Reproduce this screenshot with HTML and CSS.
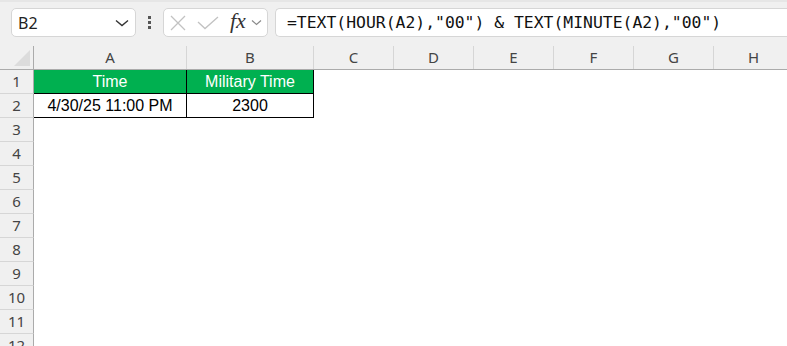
FILE: index.html
```html
<!DOCTYPE html>
<html>

<head>
    <title>Military Time</title>
    <link rel="stylesheet" href="styles.css">
</head>

<body>
    <div class="toolbar">
        <div class="name-box">
            <span>B2</span>
            <svg width="14" height="8" viewBox="0 0 14 8"><path d="M1 1.5 L7 6.5 L13 1.5" fill="none" stroke="#333" stroke-width="1.4"/></svg>
        </div>
        <div class="dots"><i></i><i></i><i></i></div>
        <div class="fx-box">
            <svg class="cancel" width="16" height="16" viewBox="0 0 16 16"><path d="M1 1 L15 15 M15 1 L1 15" stroke="#c2c2c2" stroke-width="1.3"/></svg>
            <svg class="enter" width="22" height="14" viewBox="0 0 22 14"><path d="M1 6 L8 12.5 L21 1" fill="none" stroke="#c2c2c2" stroke-width="1.3"/></svg>
            <span class="fx">fx</span>
            <svg width="11" height="7" viewBox="0 0 11 7"><path d="M1 1.5 L5.5 5.5 L10 1.5" fill="none" stroke="#8a8a8a" stroke-width="1.2"/></svg>
        </div>
        <div class="formula">=TEXT(HOUR(A2),"00") &amp; TEXT(MINUTE(A2),"00")</div>
    </div>

    <div class="sheet">
        <div class="row head">
            <div class="rh corner"><svg width="16" height="16" viewBox="0 0 16 16"><path d="M0 16 L16 16 L16 0 Z" fill="#dcdcdc"/></svg></div>
            <div class="ch a">A</div><div class="ch b">B</div><div class="ch">C</div><div class="ch">D</div>
            <div class="ch">E</div><div class="ch">F</div><div class="ch">G</div><div class="ch">H</div>
        </div>
        <div class="row">
            <div class="rh">1</div>
            <div class="cell a title">Time</div><div class="cell b title">Military Time</div>
        </div>
        <div class="row">
            <div class="rh">2</div>
            <div class="cell a data">4/30/25 11:00 PM</div><div class="cell b data">2300</div>
        </div>
        <div class="row"><div class="rh">3</div></div>
        <div class="row"><div class="rh">4</div></div>
        <div class="row"><div class="rh">5</div></div>
        <div class="row"><div class="rh">6</div></div>
        <div class="row"><div class="rh">7</div></div>
        <div class="row"><div class="rh">8</div></div>
        <div class="row"><div class="rh">9</div></div>
        <div class="row"><div class="rh">10</div></div>
        <div class="row"><div class="rh">11</div></div>
        <div class="row"><div class="rh">12</div></div>
    </div>
</body>

</html>
```

FILE: styles.css
```css
body {
    margin: 0;
    background-color: #fff;
    font-family: 'Noto Sans', sans-serif;
    overflow: hidden;
}

.toolbar {
    height: 46px;
    background-color: #f0f0f0;
    border-top: 2px solid #e6e6e6;
    box-sizing: border-box;
    display: flex;
    align-items: flex-start;
    padding: 6px 0 0 11px;
}

.name-box,
.fx-box,
.formula {
    height: 29px;
    box-sizing: border-box;
    background-color: #fff;
    border: 1px solid #d6d6d6;
    border-radius: 5px;
    display: flex;
    align-items: center;
}

.name-box {
    width: 125px;
    padding: 0 6px 0 6px;
    justify-content: space-between;
    font-size: 16px;
    color: #222;
}

.dots {
    width: 27px;
    height: 29px;
    display: flex;
    flex-direction: column;
    align-items: center;
    justify-content: center;
    gap: 2px;
}

.dots i {
    width: 3px;
    height: 3px;
    background-color: #555;
}

.fx-box {
    width: 105px;
    padding-left: 6px;
}

.fx-box .enter {
    margin-left: 11px;
}

.fx {
    font-family: 'Liberation Serif', serif;
    font-style: italic;
    font-size: 22px;
    color: #333;
    margin: -3px 5px 0 11px;
}

.formula {
    flex: 1;
    margin-left: 7px;
    border-right: none;
    border-radius: 5px 0 0 5px;
    padding-left: 11px;
    font-family: 'DejaVu Sans Mono', monospace;
    font-size: 16.4px;
    color: #111;
}

.row {
    display: flex;
    height: 24px;
}

.row.head {
    background-color: #f0f0f0;
    border-bottom: 1px solid #ababab;
    height: 24px;
    box-sizing: border-box;
}

.rh {
    width: 34px;
    flex: none;
    box-sizing: border-box;
    background-color: #f0f0f0;
    border-right: 1px solid #ababab;
    border-bottom: 1px solid #d6d6d6;
    text-align: center;
    font-size: 15px;
    line-height: 23px;
    color: #444;
}

.rh.corner {
    border-bottom: none;
    display: flex;
    align-items: flex-end;
    justify-content: flex-end;
    padding: 0 3px 3px 0;
}

.ch {
    width: 80px;
    flex: none;
    box-sizing: border-box;
    border-right: 1px solid #d6d6d6;
    text-align: center;
    font-size: 15px;
    line-height: 23px;
    color: #444;
}

.ch.a,
.cell.a {
    width: 153px;
}

.ch.b,
.cell.b {
    width: 127px;
}

.cell {
    flex: none;
    box-sizing: border-box;
    border-right: 1px solid #000;
    border-bottom: 1px solid #000;
    text-align: center;
    font-family: 'Liberation Sans', sans-serif;
    font-size: 16px;
    line-height: 23px;
    color: #000;
}

.cell.title {
    background-color: #00b050;
    color: #fff;
}
```
